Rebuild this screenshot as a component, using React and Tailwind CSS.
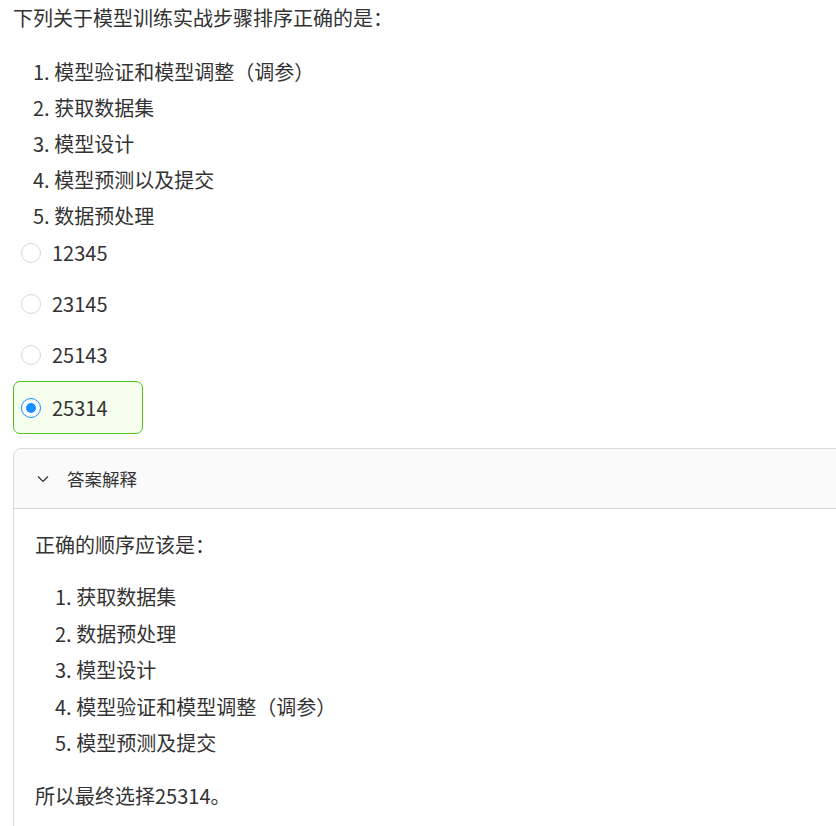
import React from 'react';

const questionSteps = [
  '模型验证和模型调整（调参）',
  '获取数据集',
  '模型设计',
  '模型预测以及提交',
  '数据预处理',
];

const answerSteps = [
  '获取数据集',
  '数据预处理',
  '模型设计',
  '模型验证和模型调整（调参）',
  '模型预测及提交',
];

const options = [
  { value: '12345', checked: false },
  { value: '23145', checked: false },
  { value: '25143', checked: false },
  { value: '25314', checked: true },
];

function Radio({ checked }) {
  if (checked) {
    return (
      <span className="flex h-[20px] w-[20px] shrink-0 items-center justify-center rounded-full border-[1.5px] border-[#1890ff] bg-white">
        <span className="h-[10px] w-[10px] rounded-full bg-[#1890ff]" />
      </span>
    );
  }
  return <span className="h-[20px] w-[20px] shrink-0 rounded-full border border-[#d9d9d9] bg-white" />;
}

function Option({ value, checked }) {
  return (
    <div
      className={`flex w-[130px] items-center gap-[11px] rounded-[7px] border px-[7px] ${
        checked ? 'h-[53px] border-[#52c41a] bg-[#f6ffed]' : 'h-[50px] border-transparent'
      }`}
    >
      <Radio checked={checked} />
      <span>{value}</span>
    </div>
  );
}

function StepList({ steps, loose }) {
  return (
    <ol className="pl-[20px]">
      {steps.map((s, i) => (
        <li key={i} className={loose ? 'leading-[36.5px]' : 'leading-[36px]'}>
          {i + 1}. {s}
        </li>
      ))}
    </ol>
  );
}

export default function App() {
  return (
    <div className="h-screen w-full overflow-hidden bg-white pl-[13px] font-['Noto_Sans_CJK_SC',sans-serif] text-[20px] leading-[36px] text-[#333]">
      <p>下列关于模型训练实战步骤排序正确的是：</p>

      <div className="mt-[18px]">
        <StepList steps={questionSteps} />
      </div>

      <div className="mt-[-6px] flex flex-col gap-[1px]">
        {options.map((o) => (
          <Option key={o.value} value={o.value} checked={o.checked} />
        ))}
      </div>

      {/* Answer explanation panel */}
      <div className="mt-[14px] w-[900px] rounded-t-[8px] border border-[#d9d9d9]">
        <div className="flex h-[60px] items-center gap-[18px] rounded-t-[8px] border-b border-[#d9d9d9] bg-[#fafafa] pl-[23px] text-[17.5px] leading-[28px]">
          <svg width="12" height="8" viewBox="0 0 12 8" fill="none">
            <path d="M1 1.5 L6 6.5 L11 1.5" stroke="#333" strokeWidth="1.2" />
          </svg>
          <span>答案解释</span>
        </div>
        <div className="px-[21px] pt-[18px] pb-[20px]">
          <p>正确的顺序应该是：</p>
          <div className="my-[16px]">
            <StepList steps={answerSteps} loose />
          </div>
          <p className="mt-[13px]">所以最终选择25314。</p>
        </div>
      </div>
    </div>
  );
}
